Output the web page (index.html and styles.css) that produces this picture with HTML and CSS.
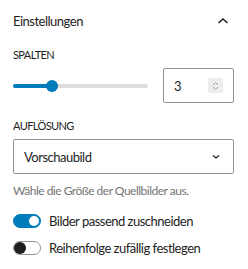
FILE: index.html
```html
<!DOCTYPE html>
<html>

<head>
    <title>Einstellungen</title>
    <link rel="stylesheet" href="styles.css">
</head>

<body>
    <div class="panel">
        <div class="panel-header">
            <span>Einstellungen</span>
            <svg class="chevron" width="12" height="8" viewBox="0 0 12 8">
                <path d="M1.5 6 6 2l4.5 4" fill="none" stroke="#1e1e1e" stroke-width="1.5"></path>
            </svg>
        </div>

        <div class="label first">Spalten</div>
        <div class="range-row">
            <div class="range">
                <div class="track"></div>
                <div class="fill"></div>
                <div class="thumb"></div>
            </div>
            <div class="number">
                <span>3</span>
                <span class="spin">
                    <svg width="9" height="12" viewBox="0 0 9 12">
                        <path d="M2 5 4.5 2.5 7 5M2 7l2.5 2.5L7 7" fill="none" stroke="#a0a0a0" stroke-width="1"></path>
                    </svg>
                </span>
            </div>
        </div>

        <div class="label">Auflösung</div>
        <div class="select">
            <span>Vorschaubild</span>
            <svg width="10" height="6" viewBox="0 0 10 6">
                <path d="M2 1.5l3 2.5 3-2.5" fill="none" stroke="#1e1e1e" stroke-width="1.2"></path>
            </svg>
        </div>
        <p class="help">Wähle die Größe der Quellbilder aus.</p>

        <div class="toggle-row">
            <span class="toggle on"><span class="knob"></span></span>
            <span>Bilder passend zuschneiden</span>
        </div>
        <div class="toggle-row">
            <span class="toggle"><span class="knob"></span></span>
            <span>Reihenfolge zufällig festlegen</span>
        </div>
    </div>
</body>

</html>
```

FILE: styles.css
```css
body {
    margin: 0;
    background: #fff;
    font-family: Lato, sans-serif;
    color: #1e1e1e;
    letter-spacing: -0.5px;
}

.panel {
    padding: 0 14px 0 13px;
}

.panel-header {
    display: flex;
    justify-content: space-between;
    align-items: center;
    height: 42px;
    font-size: 13px;
}

.chevron {
    margin-right: 5px;
}

.label {
    font-size: 11px;
    letter-spacing: -0.6px;
    text-transform: uppercase;
    line-height: 16px;
    margin: 15px 0 5px;
}

.label.first {
    margin-top: 5px;
}

.range-row {
    display: flex;
    align-items: center;
    gap: 15px;
}

.range {
    position: relative;
    flex: 1;
    height: 35px;
}

.track {
    position: absolute;
    left: 0;
    right: 0;
    top: 16px;
    height: 4px;
    border-radius: 2px;
    background: #dddddd;
}

.fill {
    position: absolute;
    left: 0;
    width: 39px;
    top: 16px;
    height: 4px;
    border-radius: 2px;
    background: #007cba;
}

.thumb {
    position: absolute;
    left: 33px;
    top: 12px;
    width: 12px;
    height: 12px;
    border-radius: 50%;
    background: #007cba;
}

.number {
    width: 71px;
    height: 35px;
    box-sizing: border-box;
    border: 1px solid #949494;
    border-radius: 2px;
    display: flex;
    align-items: center;
    justify-content: space-between;
    padding: 0 10px 0 10px;
    font-size: 13px;
}

.spin {
    width: 15px;
    height: 15px;
    background: #ededed;
    display: flex;
    align-items: center;
    justify-content: center;
}

.select {
    height: 35px;
    box-sizing: border-box;
    border: 1px solid #949494;
    border-radius: 2px;
    display: flex;
    align-items: center;
    justify-content: space-between;
    padding: 0 12px 0 10px;
    font-size: 13px;
}

.help {
    margin: 9px 0 15px;
    font-size: 12px;
    line-height: 16px;
    color: #757575;
}

.toggle-row {
    display: flex;
    align-items: center;
    gap: 8px;
    font-size: 13px;
    height: 14px;
    margin-bottom: 13px;
}

.toggle {
    position: relative;
    width: 28px;
    height: 14px;
    box-sizing: border-box;
    border: 1px solid #949494;
    border-radius: 7px;
    background: #fff;
}

.toggle .knob {
    position: absolute;
    top: 0;
    left: 0;
    width: 12px;
    height: 12px;
    border-radius: 50%;
    background: #1e1e1e;
}

.toggle.on {
    background: #007cba;
    border-color: #007cba;
}

.toggle.on .knob {
    top: 1px;
    left: 15px;
    width: 10px;
    height: 10px;
    background: #fff;
}
```
